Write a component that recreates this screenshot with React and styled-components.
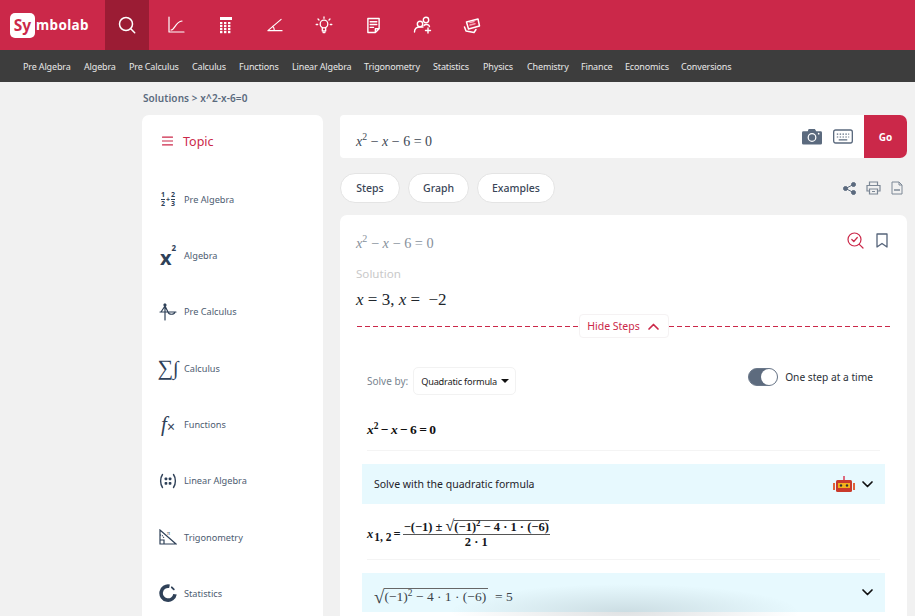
import React from "react";
import styled, { createGlobalStyle } from "styled-components";

const Global = createGlobalStyle`
  html, body { margin: 0; padding: 0; background: #f1f1f1; }
  body { width: 915px; height: 616px; overflow: hidden; font-family: "Noto Sans", "Open Sans", sans-serif; }
`;
const RED = "#cb2849";
const SLATE = "#2f4158";
const Page = styled.div`width: 915px; height: 616px; overflow: hidden; position: relative; background: #f1f1f1;`;
const TopBar = styled.header`display: flex; height: 50px; background: ${RED}; align-items: stretch;`;
const Logo = styled.div`width: 105px; display: flex; align-items: center; padding-left: 10px; box-sizing: border-box; font-family: "Noto Sans", sans-serif; font-weight: 700; color: #fff;`;
const LogoBox = styled.span`width: 25px; height: 25px; border-radius: 5px; background: #fff; color: ${RED}; font-size: 15.500px; line-height: 25px; text-align: center;`;
const LogoRest = styled.span`font-size: 13.500px; margin-left: 1px; letter-spacing: .35px;`;
const TopIcon = styled.div`
  width: ${p => (p.$active ? "44px" : "49.3px")};
  margin-right: ${p => (p.$active ? "2.6px" : "0")};
  display: flex; align-items: center; justify-content: center;
  background: ${p => (p.$active ? "#9b1c34" : "transparent")};
  svg { display: block; }
`;
const SubNav = styled.nav`height: 32px; background: #3d3d3d; display: flex; align-items: center; padding-left: 23px; color: #e8e8e8; font-size: 9px; letter-spacing: -.15px; box-sizing: border-box;`;
const SubItem = styled.span`width: ${p => p.$w}px; flex: none; white-space: nowrap;`;
const Crumb = styled.div`height: 33px; box-sizing: border-box; padding: 0 0 2px 143px; display: flex; align-items: center; font-size: 10px; font-weight: 600; color: #5a6a7d; letter-spacing: .1px;`;
const Columns = styled.main`display: flex; padding-left: 142px; gap: 17px; align-items: flex-start;`;
const Sidebar = styled.aside`width: 181px; height: 510px; flex: none; background: #fff; border-radius: 7px;`;
const SideHead = styled.div`height: 52px; margin-bottom: 4px; display: flex; align-items: center; padding-left: 20px; gap: 10px; color: ${RED}; font-size: 12.5px;`;
const SideItem = styled.div`height: 56.33px; display: flex; align-items: center; padding-left: 16px; gap: 6px; color: #4d5c71; font-size: 9.2px;`;
const SideGlyph = styled.span`width: 20px; height: 22px; flex: none; display: flex; align-items: center; justify-content: center; color: ${SLATE}; font-family: "Liberation Serif", serif; position: relative;`;
const Frac = styled.span`display: inline-flex; flex-direction: column; align-items: center; font: 700 7px/7.5px "Noto Sans", sans-serif; span + span { border-top: 1px solid ${SLATE}; }`;
const Plus = styled.span`font: 700 7px "Noto Sans", sans-serif; margin: 0 1px;`;
const BigX = styled.span`font: 700 20px/1 "Noto Sans", sans-serif; position: relative; top: 3px;`;
const SmallSup = styled.span`font: 700 8px/1 "Noto Sans", sans-serif; position: relative; top: -7px;`;
const SumG = styled.span`font: 400 22px/1 "Liberation Serif", serif; `;
const IntG = styled.span`font: italic 400 20px/1 "Liberation Serif", serif;`;
const FxF = styled.span`font: italic 400 21px/1 "Liberation Serif", serif;`;
const FxX = styled.span`font: 400 14px/1 "Noto Sans", sans-serif; position: relative; top: 3px;`;
const Right = styled.section`width: 567px; flex: none;`;
const InputBar = styled.div`height: 43px; background: #fff; border-radius: 4px 7px 7px 4px; display: flex; align-items: center; overflow: hidden; padding-left: 16px;`;
const InputMath = styled.div`flex: 1; padding-top: 10px; font: 14px "Liberation Serif", serif; color: #3d4855;`;
const InputIcons = styled.div`display: flex; align-items: center; gap: 11px; margin-right: 11px;`;
const GoButton = styled.button`width: 43px; height: 43px; border: 0; padding: 0; background: ${RED}; color: #fff; font: 700 10px "Noto Sans", sans-serif; `;
const TabsRow = styled.div`height: 30px; margin-top: 15px; display: flex; align-items: center; gap: 8px;`;
const Tab = styled.button`height: 30px; width: ${p => p.$w}px; border-radius: 15px; border: 1px solid #e4e4e4; background: #fff; color: #3a4657; font: 500 10.5px "Noto Sans", sans-serif; padding: 0;`;
const TabIcons = styled.div`margin-left: auto; display: flex; align-items: center; gap: 10px; padding-right: 4px;`;
const Card = styled.article`margin-top: 12px; height: 420px; background: #fff; border-radius: 7px 7px 0 0; box-sizing: border-box; padding-top: 18px;`;
const CardHead = styled.div`height: 20px; display: flex; align-items: center; padding: 0 19px 0 16px; justify-content: space-between;`;
const GrayMath = styled.div`font: 14.3px "Liberation Serif", serif; color: #87919c;`;
const CardActions = styled.div`display: flex; align-items: center; gap: 12px; align-self: flex-start; margin-top: -1px;`;
const SolutionLabel = styled.div`margin-top: 13px; height: 16px; padding-left: 16px; font-size: 11.6px; line-height: 16px; color: #c9c9c9;`;
const Answer = styled.div`margin-top: 8px; height: 20px; padding-left: 16px; font: 17px/20px "Liberation Serif", serif; color: #20262c; white-space: pre;`;
const Divider = styled.div`margin: 4px 17px 0; height: 24px; display: flex; align-items: center;`;
const DashLine = styled.span`flex: 1; height: 1px; background: repeating-linear-gradient(90deg, ${RED} 0 5px, transparent 5px 8px);`;
const HideSteps = styled.button`width: 90px; height: 24px; box-sizing: border-box; border: 1px solid #f5f2f3; border-radius: 4px; background: #fff; color: ${RED}; font: 400 10.5px "Noto Sans", sans-serif; display: flex; align-items: center; justify-content: center; gap: 7px; padding: 0;`;
const SolveRow = styled.div`margin-top: 29px; height: 28px; display: flex; justify-content: space-between; padding: 0 34px 0 27px;`;
const SolveBy = styled.div`display: flex; align-items: center; gap: 5px; font-size: 10px; color: #78848f;`;
const Select = styled.div`width: 103px; height: 28px; box-sizing: border-box; border: 1px solid #f2f2f2; border-radius: 5px; display: flex; align-items: center; justify-content: space-between; padding: 0 6px 0 7px; font-size: 9.2px; letter-spacing: -.2px; color: #222; white-space: nowrap;`;
const Caret = styled.span`width: 0; height: 0; border: 4.5px solid transparent; border-top: 4.5px solid #111; border-bottom: 0;`;
const ToggleGroup = styled.div`display: flex; align-items: flex-start; gap: 7px; margin-top: 1px; font-size: 10.2px; line-height: 18px; color: #2a2f36;`;
const Toggle = styled.span`width: 30px; height: 18px; box-sizing: border-box; border-radius: 9px; background: #5d6b7e; border: 1px solid #6b788a; display: flex; justify-content: flex-end;`;
const Knob = styled.span`width: 16px; height: 16px; border-radius: 50%; background: #fff;`;
const StepMath = styled.div`margin-top: 25px; height: 20px; padding-left: 27px; font: 700 13.5px/20px "Liberation Serif", serif; word-spacing: -1px; color: #111;`;
const Hair = styled.div`margin: ${p => p.$top}px 27px 0; height: 1px; background: #f4f4f4;`;
const BlueRow = styled.div`margin: ${p => p.$top}px 22px 0; height: ${p => p.$h}px; background: #e7f9fe; display: flex; align-items: center; padding: 0 11px 0 12px; font-size: 10.5px; color: #1e2329;`;
const RowEnd = styled.div`margin-left: auto; display: flex; align-items: center; gap: 6px;`;
const FormulaRow = styled.div`height: 55px; box-sizing: border-box; padding: 5px 0 0 27px; display: flex; align-items: center; font: 700 12.5px "Liberation Serif", serif; color: #14171b; gap: 2px;`;
const Sub = styled.span`font-size: 11.5px; position: relative; top: 3px; margin-left: 1px;`;
const Fraction = styled.span`display: inline-flex; flex-direction: column; align-items: center; position: relative; top: -1px; font-size: 12.5px; line-height: 14px;`;
const Num = styled.span`display: flex; align-items: flex-end; border-bottom: 1px solid #555; padding: 0 1px; white-space: pre;`;
const Den = styled.span`white-space: pre;`;
const Radical = styled.span`border-top: 1px solid #555; white-space: pre; line-height: 13px;`;
const RootSign = styled.span`font-size: ${p => p.$size}px; line-height: 1; font-weight: 400;`;
const SqrtMath = styled.div`display: flex; align-items: center; margin-top: 8px; font: 400 13.5px "Liberation Serif", serif; color: #3a4249; white-space: pre;`;
const SqrtBody = styled.span`border-top: 1px solid #666; line-height: 16px; padding-right: 2px;`;
const Fade = styled.div`position: absolute; left: 450px; width: 350px; bottom: -24px; height: 56px; background: radial-gradient(closest-side, rgba(60,75,85,.16), rgba(60,75,85,0)); pointer-events: none;`;

const W = ({ children, w = 20, h = 20, vb = "0 0 20 20", sw = 1.4, c = "#fff" }) => (
  <svg width={w} height={h} viewBox={vb} fill="none" stroke={c} strokeWidth={sw} strokeLinecap="round" strokeLinejoin="round">{children}</svg>
);
const navItems = [["Pre Algebra",61],["Algebra",45],["Pre Calculus",63],["Calculus",47],["Functions",53],["Linear Algebra",72],["Trigonometry",69],["Statistics",50],["Physics",44],["Chemistry",54],["Finance",44],["Economics",56],["Conversions",60]];

const Chevron = ({ c = "#111", up }) => (
  <W w={13} h={9} vb="0 0 13 9" sw={1.7} c={c}><path d={up ? "M2 7l4.5-4.500L11 7" : "M2 2l4.500 4.500L11 2"} /></W>
);
const Sup = styled.sup`font-size: 70%; line-height: 0;`;
const X2 = () => (<><i>x</i><Sup>2</Sup></>);

export default function App() {
  return (
    <Page>
      <Global />
      <TopBar>
        <Logo><LogoBox>Sy</LogoBox><LogoRest>mbolab</LogoRest></Logo>
        <TopIcon $active>
          <W w={20} h={20} sw={1.5}><circle cx="9" cy="9" r="6.500" /><path d="M14 14l3.700 3.700" /></W>
        </TopIcon>
        <TopIcon><W w={18} h={18} vb="0 0 18 18" sw={1.2}><path d="M2 1v15h15" /><path d="M4 14c4 0 4-8 11-9" /></W></TopIcon>
        <TopIcon><svg width="14" height="17" viewBox="0 0 14 17" fill="#fff"><rect width="12" height="3" x="1" y="0" />{[5,8,11,14].map(y => [1,5,9].map(x => <rect key={x+"-"+y} x={x} y={y} width="2.400" height="2.200" />))}</svg></TopIcon>
        <TopIcon><W w={17} h={16} vb="0 0 18 16" sw={1.2}><path d="M16 2L2 14h15" /><path d="M7 9.500c1.300 1 1.800 2.600 1.800 4.300" /></W></TopIcon>
        <TopIcon><W w={18} h={18} vb="0 0 18 18" sw={1.3}><circle cx="9" cy="8" r="3.800" /><path d="M7.300 12v3h3.400v-3M8 16.600h2M9 1v1.300M3 3l1 1M15 3l-1 1M1.200 8.500h1.500M15.300 8.500h1.500" /></W></TopIcon>
        <TopIcon><W w={15} h={17} vb="0 0 16 18" sw={1.500}><path d="M10 16.500H2V1.500h12v11zM10 16.500v-4h4M4.500 5h7M4.500 8h7M4.500 11h3.500" /></W></TopIcon>
        <TopIcon><W w={20} h={18} vb="0 0 20 18" sw={1.400}><circle cx="13" cy="4" r="2.700" /><circle cx="7" cy="8" r="2.700" /><path d="M1.500 16c0-3.500 2.500-5 5.500-5h3M11 9.500c1-1.500 5-1.500 5.500 1M15 12v5M12.500 14.500h5" /></W></TopIcon>
        <TopIcon><W w={18} h={17} vb="0 0 18 17" sw={1.500}><path d="M3.500 5L15 2l1.500 7-11 3z" /><path d="M1.500 10l1.500 4 8 1.500 2-3" /><path d="M7 5.500l4-1" stroke="#f6a6b6" /><path d="M7 8l5-1.300" stroke="#f6a6b6" /></W></TopIcon>
      </TopBar>
      <SubNav>{navItems.map(([t, w]) => <SubItem key={t} $w={w}>{t}</SubItem>)}</SubNav>
      <Crumb>Solutions &gt; x^2-x-6=0</Crumb>
      <Columns>
        <Sidebar>
          <SideHead>
            <W w={11} h={10} vb="0 0 11 10" sw={1.2} c={RED}><path d="M.5 1.200h10M.5 5h10M.5 8.800h10" /></W>
            Topic
          </SideHead>
          <SideItem><SideGlyph><Frac><span>1</span><span>2</span></Frac><Plus>+</Plus><Frac><span>2</span><span>3</span></Frac></SideGlyph>Pre Algebra</SideItem>
          <SideItem><SideGlyph><BigX>x</BigX><SmallSup>2</SmallSup></SideGlyph>Algebra</SideItem>
          <SideItem><SideGlyph><W w={18} h={18} vb="0 0 18 18" sw={1.2} c={SLATE}><path d="M6 1v16M1 9h16M6 3L2 9M6 3l3 6M9 9c1 3 6 3 7 0" /><circle cx="6" cy="2" r="1" fill={SLATE} /></W></SideGlyph>Pre Calculus</SideItem>
          <SideItem><SideGlyph><SumG>∑</SumG><IntG>∫</IntG></SideGlyph>Calculus</SideItem>
          <SideItem><SideGlyph><FxF>f</FxF><FxX>×</FxX></SideGlyph>Functions</SideItem>
          <SideItem><SideGlyph><W w={18} h={16} vb="0 0 18 16" sw={1.400} c={SLATE}><path d="M3.500 1.500C1 5 1 11 3.500 14.500M14.500 1.500C17 5 17 11 14.500 14.500" /><g fill={SLATE} stroke="none"><rect x="5.600" y="4.500" width="2.700" height="2.700" rx=".8" /><rect x="9.700" y="4.500" width="2.700" height="2.700" rx=".8" /><rect x="5.600" y="9" width="2.700" height="2.700" rx=".8" /><rect x="9.700" y="9" width="2.700" height="2.700" rx=".8" /></g></W></SideGlyph>Linear Algebra</SideItem>
          <SideItem><SideGlyph><svg width="18" height="16" viewBox="0 0 18 16" fill="none" stroke={SLATE} strokeWidth="1.200"><path d="M1 1v14h16zM1 11h4v4" /><path d="M1 6c2 0 3 1 4 3" strokeDasharray="1 1" /><text x="8" y="6" fontSize="6" fill={SLATE} stroke="none" fontFamily="Liberation Serif">π</text></svg></SideGlyph>Trigonometry</SideItem>
          <SideItem><SideGlyph><W w={18} h={18} vb="0 0 18 18" sw={3.600} c={SLATE}><path d="M10.500 2.300a7 7 0 1 0 5.500 8" strokeLinecap="butt" /><path d="M12.800 3.300l2 2" strokeWidth="1.800" /></W></SideGlyph>Statistics</SideItem>
        </Sidebar>
        <Right>
          <InputBar>
            <InputMath><X2 /> − <i>x</i> − 6 = 0</InputMath>
            <InputIcons>
              <svg width="20" height="17" viewBox="0 0 21 17"><path fill="#5b6a7e" d="M1.500 3H6l1-2.500h6.500L15 3h4.500A1.500 1.500 0 0 1 21 4.500v11a1.500 1.500 0 0 1-1.500 1.500h-18A1.500 1.500 0 0 1 0 15.500v-11A1.500 1.500 0 0 1 1.500 3z" /><circle cx="10.500" cy="9.500" r="4" fill="none" stroke="#fff" strokeWidth="1.300" /><circle cx="17.500" cy="5.500" r=".9" fill="#fff" /></svg>
              <svg width="20" height="15" viewBox="0 0 21 15" fill="none" stroke="#5b6a7e"><rect x=".7" y=".7" width="19.600" height="13.600" rx="2" strokeWidth="1.400" /><path d="M4 5h1.500M7 5h1.500M10 5h1.500M13 5h1.500M16 5h1M4 8h1.500M7 8h1.500M10 8h1.500M13 8h1.500M16 8h1M6 11h9" strokeWidth="1.200" /></svg>
            </InputIcons>
            <GoButton>Go</GoButton>
          </InputBar>
          <TabsRow>
            <Tab $w={60}>Steps</Tab><Tab $w={61}>Graph</Tab><Tab $w={78}>Examples</Tab>
            <TabIcons>
              <svg width="13" height="13" viewBox="0 0 13 13" fill="#5b6a7e" stroke="#5b6a7e"><circle cx="2.500" cy="6.500" r="2" /><circle cx="10.500" cy="2.500" r="2" /><circle cx="10.500" cy="10.500" r="2" /><path d="M2.500 6.500l8-4M2.500 6.500l8 4" /></svg>
              <svg width="15" height="14" viewBox="0 0 15 14" fill="none" stroke="#7c8896" strokeWidth="1.200"><path d="M3.500 4V1h8v3M3.500 10H1V4.500h13V10h-2.500" /><path d="M3.500 8h8v5h-8zM6 10.500h3" /></svg>
              <svg width="12" height="14" viewBox="0 0 12 14" fill="none" stroke="#7c8896"><path d="M1 1h7l3 3v9H1zM8 1v3h3" /><path d="M3 9h6" strokeWidth="1.500" /></svg>
            </TabIcons>
          </TabsRow>
          <Card>
            <CardHead>
              <GrayMath><X2 /> − <i>x</i> − 6 = 0</GrayMath>
              <CardActions>
                <W w={17} h={17} vb="0 0 17 17" sw={1.200} c={RED}><circle cx="7.500" cy="7.500" r="6.500" /><path d="M12.300 12.300L16 16M4.800 7.500l2 2 3.500-4" /></W>
                <W w={12} h={15} vb="0 0 12 15" sw={1.300} c="#55647a"><path d="M1 1h10v13L6 10.500 1 14z" /></W>
              </CardActions>
            </CardHead>
            <SolutionLabel>Solution</SolutionLabel>
            <Answer><i>x</i> = 3, <i>x</i> =  −2</Answer>
            <Divider>
              <DashLine />
              <HideSteps>Hide Steps <Chevron c={RED} up /></HideSteps>
              <DashLine />
            </Divider>
            <SolveRow>
              <SolveBy>Solve by:<Select>Quadratic formula <Caret /></Select></SolveBy>
              <ToggleGroup><Toggle><Knob /></Toggle>One step at a time</ToggleGroup>
            </SolveRow>
            <StepMath><X2 /> − <i>x</i> − 6 = 0</StepMath>
            <Hair $top={10} />
            <BlueRow $top={13} $h={40}>
              Solve with the quadratic formula
              <RowEnd>
                <svg width="22" height="16" viewBox="0 0 22 16"><rect x="10.300" y="0" width="1.400" height="4" fill="#d8304a" /><rect x="0" y="7" width="2" height="7" fill="#e0623a" /><rect x="20" y="7" width="2" height="7" fill="#e0623a" /><rect x="3" y="4" width="16" height="12" rx="1.500" fill="#c93a2b" /><rect x="5" y="7" width="12" height="5" fill="#f3b21c" /><circle cx="8" cy="9.500" r="1.200" fill="#333" /><circle cx="14" cy="9.500" r="1.200" fill="#333" /></svg>
                <Chevron />
              </RowEnd>
            </BlueRow>
            <FormulaRow>
              <span><i>x</i><Sub>1, 2</Sub></span>=
              <Fraction>
                <Num>−(−1) ± <RootSign $size={16}>√</RootSign><Radical>(−1)<Sup>2</Sup> − 4 · 1 · (−6)</Radical></Num>
                <Den>2 · 1</Den>
              </Fraction>
            </FormulaRow>
            <Hair $top={0} />
            <BlueRow $top={13} $h={39}>
              <SqrtMath><RootSign $size={19}>√</RootSign><SqrtBody>(−1)<Sup>2</Sup> − 4 · 1 · (−6)</SqrtBody>  = 5</SqrtMath>
              <RowEnd><Chevron /></RowEnd>
            </BlueRow>
          </Card>
        </Right>
      </Columns>
      <Fade />
    </Page>
  );
}
